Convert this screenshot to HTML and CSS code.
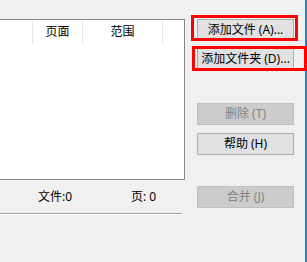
FILE: index.html
```html
<!DOCTYPE html>
<html lang="zh">
<head>
<meta charset="utf-8">
<link rel="stylesheet" href="styles.css">
</head>
<body>
<div class="window">
  <div class="left">
    <div class="listbox">
      <div class="header">
        <div class="col c1"></div>
        <div class="col c2">页面</div>
        <div class="col c3">范围</div>
      </div>
    </div>
    <div class="status">
      <span class="s1">文件:0</span>
      <span class="s2">页: 0</span>
    </div>
    <div class="sep"></div>
  </div>
  <div class="right">
    <button class="btn b1">添加文件 (A)...</button>
    <button class="btn b2">添加文件夹 (D)...</button>
    <button class="btn b3" disabled>删除 (T)</button>
    <button class="btn b4">帮助 (H)</button>
    <button class="btn b5" disabled>合并 (J)</button>
  </div>
  <div class="edge"></div>
  <div class="mark m1"></div>
  <div class="mark m2"></div>
</div>
</body>
</html>
```
FILE: styles.css
```css
html, body {
  margin: 0;
  padding: 0;
  background: #f0f0f0;
}
.window {
  position: relative;
  width: 307px;
  height: 262px;
  overflow: hidden;
  display: flex;
  font-family: "Noto Sans", "Noto Sans CJK SC", sans-serif;
  font-size: 12px;
  color: #000;
}
.left {
  width: 190px;
  padding-top: 19px;
  flex: none;
}
.listbox {
  margin-left: -10px;
  width: 193px;
  height: 159px;
  background: #fff;
  border: 1px solid #828790;
}
.header {
  display: flex;
  height: 24px;
  padding-top: 1px;
}
.col {
  height: 23px;
  line-height: 21px;
  text-align: center;
  border-right: 1px solid #e5e5e5;
}
.c1 { width: 41px; }
.c2 { width: 49px; }
.c3 { width: 79px; }
.status {
  display: flex;
  height: 33px;
  line-height: 34px;
  padding-left: 38px;
}
.s1 { width: 93px; }
.sep {
  width: 182px;
  height: 0;
  border-top: 1px solid #a0a0a0;
  border-bottom: 1px solid #ffffff;
}
.right {
  display: flex;
  flex-direction: column;
  padding-left: 7px;
  padding-top: 19px;
}
.btn {
  width: 97px;
  height: 22px;
  padding: 0;
  margin: 0;
  background: #e1e1e1;
  border: 1px solid #adadad;
  font-family: "Noto Sans", "Noto Sans CJK SC", sans-serif;
  font-size: 12px;
  line-height: 18px;
  color: #000;
  white-space: nowrap;
}
.btn:disabled {
  background: #cccccc;
  border-color: #bfbfbf;
  color: #838383;
}
.b2 { margin-top: 7px; }
.b3 { margin-top: 33px; }
.b4 { margin-top: 8px; }
.b5 { margin-top: 31px; }
.edge {
  position: absolute;
  right: 0;
  top: 0;
  width: 2px;
  height: 262px;
  background: #2b7cd3;
}
.mark {
  position: absolute;
  border: 3px solid #ff0000;
  box-sizing: border-box;
}
.m1 { left: 191px; top: 15px; width: 107px; height: 26px; }
.m2 { left: 192px; top: 46px; width: 115px; height: 25px; }
```
